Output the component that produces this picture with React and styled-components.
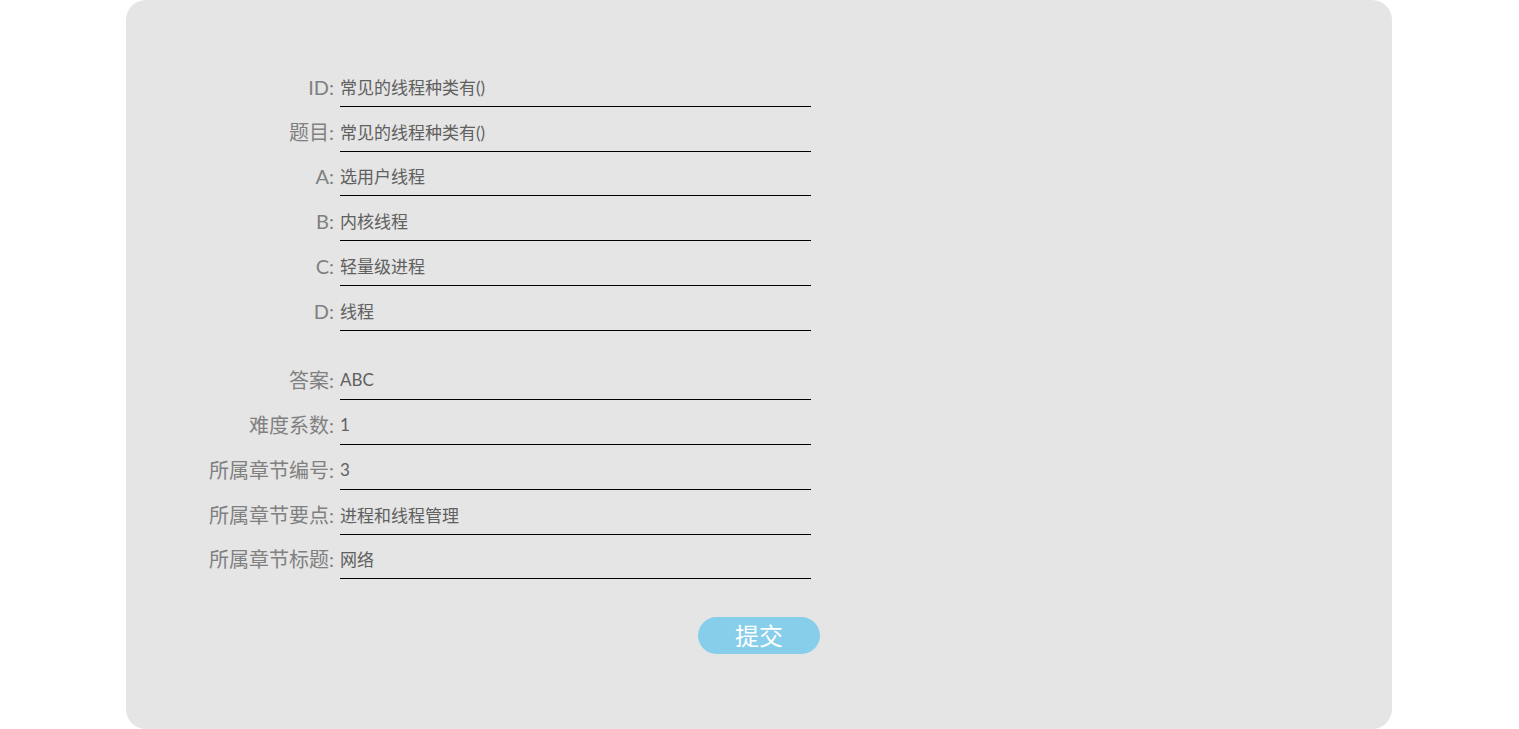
import React from "react";
import styled, { createGlobalStyle } from "styled-components";

const Global = createGlobalStyle`
  html, body { margin: 0; padding: 0; background: #fff; }
  body { font-family: Lato, "Noto Sans CJK SC", sans-serif; }
`;

const Card = styled.div`
  width: 1266px;
  height: 729px;
  margin: 0 auto 0 126px;
  box-sizing: border-box;
  background: #e5e5e5;
  border-radius: 20px;
  padding-top: 62px;
`;

const Form = styled.form`
  display: flex;
  flex-direction: column;
`;

const Group = styled.div`
  display: flex;
  flex-direction: column;
  margin-bottom: ${(p) => p.$gap || 0}px;
`;

const Row = styled.div`
  display: flex;
  align-items: flex-end;
  height: 44.75px;
`;

const LabelWrap = styled.div`
  width: 208px;
  display: flex;
  justify-content: flex-end;
`;

const Label = styled.label`
  font-size: 20px;
  line-height: 36px;
  height: 38px;
  color: #808080;
  white-space: nowrap;
`;

const Input = styled.input`
  width: 471px;
  height: 38px;
  margin-left: 6px;
  box-sizing: border-box;
  border: none;
  border-bottom: 1px solid #000;
  background: transparent;
  padding: 0 0 2px;
  font-family: Lato, "Noto Sans CJK SC", sans-serif;
  font-size: 17px;
  color: #606060;
  outline: none;
`;

const ButtonRow = styled.div`
  display: flex;
  padding-left: 572px;
  margin-top: 38px;
`;

const Submit = styled.button`
  width: 122px;
  height: 37px;
  border: none;
  border-radius: 19px;
  background: #87ceeb;
  color: #fff;
  font-family: Lato, "Noto Sans CJK SC", sans-serif;
  font-size: 24px;
  line-height: 37px;
  padding: 0;
  cursor: pointer;
`;

const first = [
  ["ID", "常见的线程种类有()"],
  ["题目", "常见的线程种类有()"],
  ["A", "选用户线程"],
  ["B", "内核线程"],
  ["C", "轻量级进程"],
  ["D", "线程"],
];

const second = [
  ["答案", "ABC"],
  ["难度系数", "1"],
  ["所属章节编号", "3"],
  ["所属章节要点", "进程和线程管理"],
  ["所属章节标题", "网络"],
];

function Field({ label, value }) {
  return (
    <Row>
      <LabelWrap>
        <Label>{label}:</Label>
      </LabelWrap>
      <Input defaultValue={value} />
    </Row>
  );
}

export default function App() {
  return (
    <>
      <Global />
      <Card>
        <Form onSubmit={(e) => e.preventDefault()}>
          <Group $gap={25}>
            {first.map(([l, v]) => (
              <Field key={l} label={l} value={v} />
            ))}
          </Group>
          <Group>
            {second.map(([l, v]) => (
              <Field key={l} label={l} value={v} />
            ))}
          </Group>
          <ButtonRow>
            <Submit type="submit">提交</Submit>
          </ButtonRow>
        </Form>
      </Card>
    </>
  );
}
